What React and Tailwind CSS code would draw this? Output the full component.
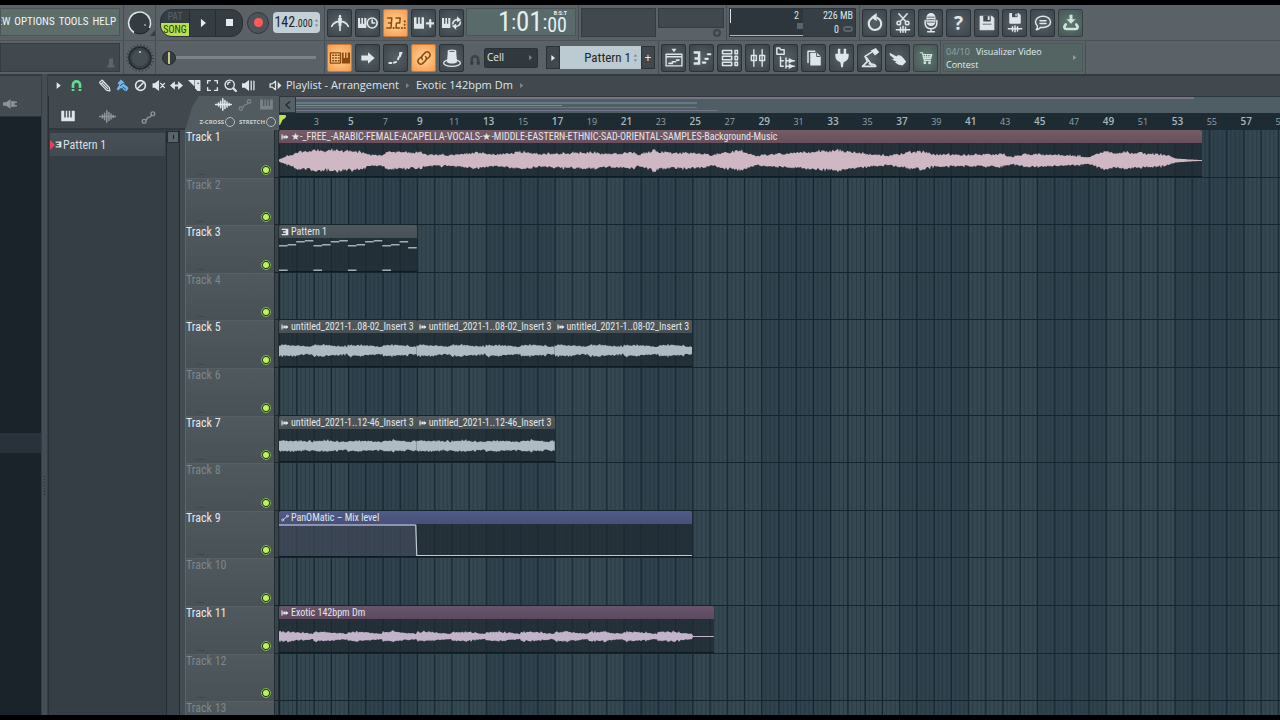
import React from "react";

const BAR = 17.22;
const FONT = "font-['Roboto_Condensed','Lato',sans-serif]";

/* ---------- icons ---------- */

function Icon({ children, className = "size-5", stroke = 1.6, fill = "none" }) {
  return (
    <svg
      viewBox="0 0 24 24"
      className={`shrink-0 ${className}`}
      fill={fill}
      stroke={fill === "none" ? "currentColor" : "none"}
      strokeWidth={stroke}
      strokeLinecap="round"
      strokeLinejoin="round"
      aria-hidden="true"
    >
      {children}
    </svg>
  );
}

const solid = { fill: "currentColor", stroke: "none" };
const pianoPath = "M3 5h4v9h2V5h2v9h2V5h2v9h2V5h4v14H3z";

const Piano = ({ className }) => (
  <Icon className={className}><path {...solid} d={pianoPath} /></Icon>
);
const Wave = ({ className }) => (
  <Icon className={className} stroke={2.2}>
    <path d="M1 12h22M5 10v4M8 7.500v9M11 4v16M14 6.500v11M17 8.500v7M20 10.500v3" />
  </Icon>
);
const Nodes = ({ className }) => (
  <Icon className={className} stroke={2.2}>
    <circle cx="5" cy="18" r="3" /><circle cx="19" cy="6" r="3" /><path d="M8 16.500L11 12l4-1 2-3" />
  </Icon>
);
const Tri = ({ className }) => (
  <Icon className={className}><path {...solid} d="M7 3l11 9-11 9z" /></Icon>
);
const Play = ({ className }) => (
  <Icon className={className}><path {...solid} d="M7 2l12 10L7 22z" /></Icon>
);
const Magnet = ({ className }) => (
  <Icon className={className} stroke={5}>
    <path strokeLinecap="butt" d="M5.500 22V11a6.500 6.500 0 0 1 13 0v11" />
    <path stroke="#263036" strokeWidth="1.500" strokeLinecap="butt" d="M2 17.500h7M15 17.500h7" />
  </Icon>
);
const Pencil = ({ className }) => (
  <Icon className={className} stroke={2.2}>
    <path d="M3 6l5-4 13 14 1 6-6-1L3 7zM6 9l4-4M9 9l9 9M12 7l8 8" />
  </Icon>
);
const Brush = ({ className }) => (
  <Icon className={className}>
    <path {...solid} d="M9 1l6 5 1 5 4 2 3 4-3 5-5-1-3-4-4 0-4 4-3-2 3-5 2-3-3-3z" />
    <path stroke="#263f52" strokeWidth="1.500" d="M8 12l6-4M13 15l5 4" />
  </Icon>
);
const Ban = ({ className }) => (
  <Icon className={className} stroke={3}><circle cx="12" cy="12" r="9" /><path d="M6 18L18 6" /></Icon>
);
const Mute = ({ className }) => (
  <Icon className={className} stroke={2.4}>
    <path {...solid} d="M1 8h4l8-6v20l-8-6H1z" /><path d="M16 8l7 8M23 8l-7 8" />
  </Icon>
);
const Slip = ({ className }) => (
  <Icon className={className} stroke={4}>
    <path {...solid} d="M0 12l9-8v16zM24 12l-9-8v16z" /><path d="M6 12h12" />
  </Icon>
);
const Knife = ({ className }) => (
  <Icon className={className} stroke={2}>
    <path {...solid} d="M0 2h12v12z" /><path d="M14 3h8v18h-4l-4-4z" fill="currentColor" /><circle cx="18.500" cy="8" r="1.500" fill="#41494e" stroke="none" />
  </Icon>
);
const SelectBox = ({ className }) => (
  <Icon className={className} stroke={2.6}>
    <path d="M3 8V3h5M16 3h5v5M21 16v5h-5M8 21H3v-5" />
  </Icon>
);
const Zoom = ({ className }) => (
  <Icon className={className} stroke={2.6}>
    <circle cx="10.500" cy="10.500" r="8.500" /><path d="M7 10a4 4 0 0 1 4-4" /><path strokeWidth="4" d="M17 17l5 5" />
  </Icon>
);
const PlayTool = ({ className }) => (
  <Icon className={className} stroke={2.4}>
    <path {...solid} d="M0 8h5l8-6v20l-8-6H0z" /><path d="M17 4v16M22 4v16" />
  </Icon>
);
const Speaker = ({ className }) => (
  <Icon className={className} stroke={2.4}>
    <path d="M2 9h4l6-5v16l-6-5H2z" /><path {...solid} d="M16 5l7 7-7 7z" />
  </Icon>
);
const ClipArrow = ({ className }) => (
  <Icon className={className} stroke={3}>
    <path d="M3 5v14M3 12h17" /><path {...solid} d="M8 5l6 7-6 7zM14 5l8 7-8 7z" />
  </Icon>
);
const PatternGlyph = ({ className }) => (
  <Icon className={className}>
    <path {...solid} d="M2 2h20v20H2v-4h12v-4H6v-4h8V6H2z" />
  </Icon>
);

const I = {
  metronome: (
    <Icon><path d="M12 3v18M2 16c2-4 5-6 10-6s8 2 10 6" strokeWidth="2" /><path {...solid} d="M9.500 6h5l-1 10h-3z" /><circle cx="12" cy="4" r="1.500" {...solid} /></Icon>
  ),
  wait: (
    <Icon stroke={2}><path {...solid} d="M0 6h2.500v7h1.500V6h2v7h1.500V6h2.500v12H0z" /><circle cx="17" cy="12" r="6" /><path d="M17 8.500V12h3" /></Icon>
  ),
  countdown: (
    <Icon stroke={1.8}>
      <path d="M2 6h5l-.500 6H3M6.500 12l-.500 6H1M12 6h5l-.500 6h-4l-.500 6h4" /><path strokeWidth="2.400" d="M9 18h.1M19 18h.1M22.500 10v.1M22.500 14v.1M22.500 18v.1" />
    </Icon>
  ),
  overdub: (
    <Icon stroke={2.6}><path {...solid} d="M0 5h3v8h2V5h2v8h2V5h3v14H0z" /><path d="M19.500 8.500v8M15.500 12.500h8" /></Icon>
  ),
  loop: (
    <Icon stroke={2}><path {...solid} d="M0 6h2.500v7h1.500V6h2v7h1.500V6h2.500v12H0z" /><path d="M13 13a5 5 0 0 1 7-4.500M22 11a5 5 0 0 1-7 4.500" /><path {...solid} d="M18 4l5 4.500-5 2.500zM17 20l-5-4.500 5-2.500z" /></Icon>
  ),
  typing: (
    <Icon className="size-[22px]" stroke={1.6}>
      <path strokeWidth="1.400" d="M1.500 6.500h11v11h-11z" /><path strokeWidth="1.500" d="M4 9h7M4 12h7M4 15h7" strokeDasharray="1 2" />
      <path {...solid} d="M14 6h2v6h1.500V6h1.500v6h1.500V6H23v12h-9z" />
    </Icon>
  ),
  arrow: <Icon><path {...solid} d="M4 9h8V5l8 7-8 7v-4H4z" /></Icon>,
  slide: (
    <Icon className="size-4" stroke={3}><path d="M2 19.500h3M9 19l3-1M15 14l1-3" /><path {...solid} d="M17 3h5l-3 8h-3z" /></Icon>
  ),
  link: (
    <Icon className="size-[18px]" stroke={2}>
      <path d="M10 14a4 4 0 0 1 0-5.500l4-4a4 4 0 0 1 5.500 5.500l-3 3M14 10a4 4 0 0 1 0 5.500l-4 4A4 4 0 0 1 4.500 14l3-3" />
    </Icon>
  ),
  hat: (
    <Icon stroke={1.6}>
      <ellipse cx="12" cy="18" rx="10" ry="4" /><path {...solid} d="M7 4h10l1 13c-2 2-10 2-12 0z" /><ellipse cx="12" cy="4" rx="4.500" ry="1.500" fill="#5b6469" />
    </Icon>
  ),
  undo: (
    <Icon stroke={2.6}><path d="M8 6.500a7.500 7.500 0 1 0 7 -.500" /><path {...solid} d="M7 5l7-5v10z" /></Icon>
  ),
  cut: (
    <Icon stroke={1.8}><path d="M7 1l8 9M17 1L9 10M4 20h16M9 17v6M12 16v7M15 17v6" /><circle cx="7" cy="12" r="2.200" /><circle cx="17" cy="12" r="2.200" /></Icon>
  ),
  mic: (
    <Icon stroke={1.8}><rect x="7.500" y="0.800" width="9" height="14" rx="4.500" fill="currentColor" /><path stroke="#4a5358" strokeWidth="1" d="M8 5h8M8 8h8M8 11h8" /><path d="M5 9v4a7 6 0 0 0 14 0V9M12 19v3M8 22.500h8" /></Icon>
  ),
  save: (
    <Icon className="size-[18px]"><path fill="currentColor" d="M3 3h15l3 3v15H3z" /><path fill="#424b50" stroke="none" d="M7 2h10v8H7zM6 13h12v1H6z" /><path fill="currentColor" stroke="none" d="M13 3h2.500v5H13z" /></Icon>
  ),
  saveNew: (
    <Icon stroke={1.8}><path fill="currentColor" d="M6 1h10l2 2v9H6z" /><path fill="#424b50" stroke="none" d="M8.500 0H15v5H8.500z" /><path fill="currentColor" stroke="none" d="M12.500 1H14v3h-1.500z" /><path d="M4 19h16M9 16.500v5M12 15.500v7M15 16.500v5" /></Icon>
  ),
  chat: (
    <Icon className="size-[18px]" stroke={2}><path d="M12 3c5.500 0 10 3 10 7.500S17.500 18 12 18c-1 0-2 0-3-.300C7 20 5 21 3 21c1.500-1.500 2-3 1.500-5C3 14.500 2 12.500 2 10.500 2 6 6.500 3 12 3z" /><path d="M8 9h8M8 12.500h8" /></Icon>
  ),
  download: (
    <Icon className="size-[18px]"><path {...solid} d="M10 1h4v6h4l-6 6-6-6h4z" /><path stroke="currentColor" strokeWidth="3.500" d="M5 14c-3 3-2 6 1 6h12c3 0 4-3 1-6" /></Icon>
  ),
  playlist: (
    <Icon><path d="M2.500 7.500h19v14h-19zM2.500 10.500h19" /><path {...solid} d="M9 1h6l-3 4z" /><path strokeWidth="2" d="M6 18.500h4M10 16.500h4M15 14.500h3" /></Icon>
  ),
  roll: (
    <Icon><path {...solid} d="M2 4h8v16H2v-3h5v-3H3v-3h4V7H2z" /><path strokeWidth="2.600" d="M13 17.500h3M16 13h3M19 7.500h3" /></Icon>
  ),
  rack: (
    <Icon stroke={1.8}><path d="M3 3h11v4H3zM3 10h11v4H3zM3 17h11v4H3zM18 3h3v4h-3zM18 10h3v4h-3zM18 17h3v4h-3z" /></Icon>
  ),
  mixer: (
    <Icon stroke={1.6}><path d="M7 2v6M7 16v6M17 2v6M17 16v6M4 9h6v6H4zM14 9h6v6h-6zM7 10.500v3M17 10.500v3" /></Icon>
  ),
  browser: (
    <Icon className="size-[22px]" stroke={1.6}><path d="M2 8V1h3l1 2h4v5zM6 11v10h3M6 15h3M12 12v6M12 15h9M12 19v4M12 21h9" /><path {...solid} d="M15 12l6 3-6 3zM15 18l6 3-6 3z" /></Icon>
  ),
  files: (
    <Icon className="size-[18px]"><path d="M4 18V3h9" strokeWidth="2" /><path {...solid} d="M7 5h9l5 5v12H7z" /><path stroke="#424b50" strokeWidth="1.200" d="M15.500 5.500V10H20" /></Icon>
  ),
  plug: (
    <Icon><path {...solid} d="M7 1h3v6h4V1h3v6h3v2c0 5-3 7-6 8l-1 6h-2l-1-6c-3-1-6-3-6-8V7h3z" /></Icon>
  ),
  lamp: (
    <Icon stroke={2}><path d="M14 5L6 10l3 6-6 6h16c-1-3-5-3-8-3M8 12l6 8" /><path {...solid} d="M13 3l6-3 4 5-5 4z" /></Icon>
  ),
  hand: (
    <Icon className="size-[18px]"><path {...solid} d="M1 5l9 5 2-2 4 1 3 3 4 5-5 5-5-1-5-3 2-1-6-3 3-1-6-5z" /></Icon>
  ),
  cart: (
    <Icon className="size-[14px]" stroke={2}><path d="M2 3h4l3 13h11M7 6h15l-2 7H9M11 6v7M15 6v7M19 6v6M7 10h14" /><circle cx="10" cy="20" r="1.500" /><circle cx="18" cy="20" r="1.500" /></Icon>
  ),
};

/* ---------- toolbar pieces ---------- */

function ToolButton({ label, active, tint, children }) {
  const look = active
    ? "bg-[radial-gradient(circle,#ffd796,#f59a50)] text-[#8a4a12] border-[#c87838]"
    : tint
      ? "bg-[radial-gradient(circle,#5f7873,#465653)] text-[#cfe4dc] border-[#37403f]"
      : "bg-[radial-gradient(circle,#566066,#3b4449)] text-[#dfe6e9] border-[#2c3338]";
  return (
    <button
      type="button"
      aria-label={label}
      className={`flex h-7 w-[25px] shrink-0 items-center justify-center rounded-[2px] border ${look}`}
    >
      {children}
    </button>
  );
}

const Sep = () => <div className="w-px shrink-0 self-stretch bg-[#464e53]" />;

function Knob({ ring }) {
  return (
    <svg viewBox="0 0 30 30" className="size-[30px]" role="img" aria-label={ring ? "Main volume" : "Main pitch"}>
      {ring ? (
        <>
          <circle cx="15" cy="15" r="11" fill="#343c41" stroke="#20272b" />
          <path d="M9 24.500A11 11 0 1 1 24.500 20" fill="none" stroke="#dce4e7" strokeWidth="1.600" />
          <circle cx="20" cy="17" r="1" fill="#9aa4a8" />
          <path d="M30 22v6h-5z" fill="#353d41" />
        </>
      ) : (
        <>
          <circle cx="15" cy="15" r="13" fill="none" stroke="#373f43" strokeWidth="2" strokeDasharray="1 2.400" />
          <circle cx="15" cy="15" r="11" fill="#3a4247" stroke="#22292d" strokeWidth="1.500" />
          <circle cx="15" cy="15" r="8" fill="#454e53" />
          <circle cx="15" cy="9" r="1" fill="#cbd4d8" />
        </>
      )}
    </svg>
  );
}

function TopBar() {
  return (
    <header className="shrink-0 overflow-hidden bg-[#5a6268]">
      <div className="flex h-9 border-b border-[#4b5358]">
        <nav className={`my-[3px] flex h-7 w-[120px] shrink-0 items-center justify-end gap-1 overflow-hidden border border-[#4a5655] bg-[#5d6d6a] pr-[3px] text-[11px] text-[#f0f5f4] ${FONT}`}>
          <button type="button">VIEW</button>
          <button type="button">OPTIONS</button>
          <button type="button">TOOLS</button>
          <button type="button">HELP</button>
        </nav>
        <div className="w-[3px] shrink-0" />
        <Sep />
        <div className="flex w-[31px] shrink-0 items-center justify-center"><Knob ring /></div>
        <Sep />
        <div className="flex w-[168px] shrink-0 items-center pl-1">
          <div className="flex h-7 w-[83px] overflow-hidden rounded-[12px] border border-[#2a3034] bg-[#363d42]">
            <button type="button" className={`flex w-7 flex-col text-center text-[10px] leading-[13px] ${FONT}`}>
              <span className="block w-full text-[#596167]">PAT</span>
              <span className="block w-full bg-[#b5e04f] text-[#2a3a10]">SONG</span>
            </button>
            <button type="button" aria-label="Play" className="flex w-[27px] items-center justify-center border-x border-[#272d31] text-[#e6ebed]"><Play className="size-[10px]" /></button>
            <button type="button" aria-label="Stop" className="flex flex-1 items-center justify-center"><span className="size-[7px] bg-[#e6ebed]" /></button>
          </div>
          <button type="button" aria-label="Record" className="ml-1 flex size-[22px] items-center justify-center rounded-full border border-[#31383c] bg-[#4c5459]">
            <span className="size-[9px] rounded-full bg-[#ff5a55]" />
          </button>
          <button type="button" aria-label="Tempo" className="ml-1 flex h-[21px] w-[47px] items-center justify-center gap-px rounded-[4px] bg-[#c3d0d6] text-[#1e262a]">
            <span className={`text-[14px] leading-5 ${FONT}`}>142<span className="text-[10px]">.000</span></span>
            <span className="flex flex-col text-[#7b8a91]"><Tri className="size-[5px] -rotate-90" /><Tri className="size-[5px] rotate-90" /></span>
          </button>
        </div>
        <Sep />
        <div className="flex shrink-0 items-center gap-[3px] px-[2px]">
          <ToolButton label="Metronome">{I.metronome}</ToolButton>
          <ToolButton label="Wait for input">{I.wait}</ToolButton>
          <ToolButton label="Countdown before recording" active>{I.countdown}</ToolButton>
          <ToolButton label="Overdub">{I.overdub}</ToolButton>
          <ToolButton label="Loop recording">{I.loop}</ToolButton>
        </div>
        <div className={`my-[3px] flex h-7 w-[110px] shrink-0 items-center justify-end border border-[#4a5655] bg-[#586a6a] pr-2 text-[#e4eff2] ${FONT}`}>
          <span className="text-[27px] leading-7">1</span>
          <span className="text-[20px] leading-7">:</span>
          <span className="text-[27px] leading-7">01</span>
          <span className="text-[20px] leading-7">:</span>
          <span className="flex flex-col items-end">
            <span className="text-[6px] leading-[6px] font-bold">B:S:T</span>
            <span className="text-[20px] leading-[18px]">00</span>
          </span>
        </div>
        <div className="w-[2px] shrink-0" />
        <Sep />
        <div className="my-[3px] ml-[2px] w-[75px] shrink-0 border border-[#353c41] bg-[#41484e]" />
        <div className="mt-[3px] ml-[2px] flex w-[66px] shrink-0 flex-col items-end">
          <div className="h-5 w-full border border-[#353c41] bg-[#41484e]" />
          <span className="mt-[1px] mr-[3px] size-[8px] rounded-full border-2 border-[#3d454a]" />
        </div>
        <div className="w-[2px] shrink-0" />
        <Sep />
        <div className={`my-[3px] ml-[2px] grid w-[127px] shrink-0 grid-cols-[1fr_52px] grid-rows-2 border border-[#2d343a] bg-[#2d363d] text-right text-[10px] leading-[13px] text-[#dfe6e9] ${FONT}`}>
          <span className="border-l border-[#dfe6e9] pr-1">2</span>
          <span className="bg-[#353f45] pr-[2px]">226 MB</span>
          <span className="border-b border-[#aeb8bd]"><span className="ml-auto block size-[6px] bg-[#59636a]" /></span>
          <span className="flex items-center justify-end gap-1 bg-[#353f45] pr-[2px]">0<span className="h-[6px] w-[10px] rounded-full border-2 border-[#59636a]" /></span>
        </div>
        <div className="w-[3px] shrink-0" />
        <Sep />
        <div className="flex shrink-0 items-center gap-[3px] px-[2px]">
          <ToolButton label="Undo">{I.undo}</ToolButton>
          <ToolButton label="Cut">{I.cut}</ToolButton>
          <ToolButton label="Record audio">{I.mic}</ToolButton>
          <ToolButton label="Help"><span className="font-['Open_Sans',sans-serif] text-[19px] leading-5 font-bold">?</span></ToolButton>
          <ToolButton label="Save">{I.save}</ToolButton>
          <ToolButton label="Save new version">{I.saveNew}</ToolButton>
          <ToolButton label="Comments">{I.chat}</ToolButton>
          <ToolButton label="Download" tint>{I.download}</ToolButton>
        </div>
      </div>

      <div className="flex h-[33px]">
        <div className="my-[2px] flex w-[120px] shrink-0 items-end justify-end border border-[#363d42] bg-[#41484e] pr-[2px] pb-[2px] text-[#5d666b]">
          <Icon className="size-3"><path {...solid} d="M8 3h8v13h3v5H5v-5h3z" /></Icon>
        </div>
        <div className="w-[3px] shrink-0" />
        <Sep />
        <div className="flex w-[31px] shrink-0 items-center justify-center"><Knob /></div>
        <Sep />
        <div className="flex w-[168px] shrink-0 items-center pl-[6px] pr-2">
          <input
            type="range"
            min="0"
            max="100"
            defaultValue="0"
            aria-label="Song position"
            className="h-[14px] w-full appearance-none bg-[linear-gradient(#7b8489,#7b8489)] bg-[length:100%_3px] bg-center bg-no-repeat [&::-webkit-slider-thumb]:size-[14px] [&::-webkit-slider-thumb]:appearance-none [&::-webkit-slider-thumb]:rounded-full [&::-webkit-slider-thumb]:border [&::-webkit-slider-thumb]:border-[#22282b] [&::-webkit-slider-thumb]:bg-[linear-gradient(90deg,#363d40_5px,#c9c98a_5px,#c9c98a_7px,#363d40_7px)]"
          />
        </div>
        <Sep />
        <div className="flex shrink-0 items-center gap-[3px] px-[2px]">
          <ToolButton label="Typing keyboard to piano" active>{I.typing}</ToolButton>
          <ToolButton label="Step edit">{I.arrow}</ToolButton>
          <ToolButton label="Slide notes">{I.slide}</ToolButton>
          <ToolButton label="Link controls" active>{I.link}</ToolButton>
          <ToolButton label="Hat">{I.hat}</ToolButton>
        </div>
        <div className="flex w-[18px] shrink-0 items-center justify-center pt-1 text-[#3a4247]"><Magnet className="size-3" /></div>
        <div className="relative flex w-[54px] shrink-0 items-center text-[#e6ebed]">
          <select aria-label="Snap" className="h-5 w-full appearance-none rounded-[2px] border border-[#2a3034] bg-[#32393e] pl-[2px] font-['Open_Sans',sans-serif] text-[10px]">
            <option>Cell</option>
          </select>
          <span className="pointer-events-none absolute right-1 text-[#7a8489]"><Tri className="size-[7px]" /></span>
        </div>
        <div className="ml-2 flex shrink-0 items-center">
          <button type="button" aria-label="Pattern menu" className="flex h-[23px] w-[14px] items-center justify-center border border-[#2c3338] bg-[#40484d] text-[#e6ebed]"><Tri className="size-2" /></button>
          <button type="button" className={`flex h-[23px] w-[81px] items-center justify-end gap-[2px] bg-[#bccad1] pr-[3px] text-[13px] text-[#1e262a] ${FONT}`}>
            Pattern 1
            <span className="flex flex-col text-[#7b8a91]"><Tri className="size-[5px] -rotate-90" /><Tri className="size-[5px] rotate-90" /></span>
          </button>
          <button type="button" aria-label="Add pattern" className="flex h-[23px] w-[14px] items-center justify-center border border-[#2c3338] bg-[#40484d] text-[12px] leading-3 text-[#e6ebed]">+</button>
        </div>
        <div className="w-[3px] shrink-0" />
        <Sep />
        <div className="flex shrink-0 items-center gap-[3px] px-[2px]">
          <ToolButton label="View playlist">{I.playlist}</ToolButton>
          <ToolButton label="View piano roll">{I.roll}</ToolButton>
          <ToolButton label="View channel rack">{I.rack}</ToolButton>
          <ToolButton label="View mixer">{I.mixer}</ToolButton>
          <ToolButton label="View browser">{I.browser}</ToolButton>
          <ToolButton label="Project picker">{I.files}</ToolButton>
          <ToolButton label="Plugin picker">{I.plug}</ToolButton>
          <ToolButton label="Tempo tapper">{I.lamp}</ToolButton>
          <ToolButton label="Touch controllers">{I.hand}</ToolButton>
          <ToolButton label="Shop" tint>{I.cart}</ToolButton>
        </div>
        <Sep />
        <a href="#news" className="mx-[2px] my-[2px] flex w-[140px] shrink-0 items-center justify-between border border-[#495a59] bg-[#536463] pr-1 pl-[2px] font-['Open_Sans',sans-serif] text-[9px] leading-[13px] text-[#e2eceb]">
          <span><span className="mr-[6px] text-[#93a5a3]">04/10</span>Visualizer Video<br />Contest</span>
          <span className="text-[#8fa19f]"><Tri className="size-[7px]" /></span>
        </a>
        <Sep />
      </div>
    </header>
  );
}

/* ---------- playlist ---------- */

const tools = [
  ["Draw", Pencil], ["Paint", Brush], ["Delete", Ban], ["Mute", Mute], ["Slip", Slip],
  ["Slice", Knife], ["Select", SelectBox], ["Zoom", Zoom], ["Playback", PlayTool],
];

function PlaylistTitle() {
  return (
    <div className="flex h-[22px] shrink-0 items-center border-t-2 border-[#343b40] bg-[#41494e] pb-[2px] font-['Open_Sans',sans-serif] text-[12px] leading-4 text-[#dfe5e8]">
      <button type="button" aria-label="Playlist options" className="flex w-[20px] justify-center"><Tri className="size-[9px]" /></button>
      <button type="button" aria-label="Snap" className="flex w-[17px] justify-center text-[#5fdd8f]"><Magnet className="size-[13px]" /></button>
      <div className="ml-[10px] flex">
        {tools.map(([name, Glyph]) => (
          <button key={name} type="button" aria-label={name} className={`flex w-[18px] justify-center ${name === "Paint" ? "text-[#6bb9ee]" : ""}`}>
            <Glyph className="size-[13px]" />
          </button>
        ))}
      </div>
      <span className="ml-3 flex"><Speaker className="size-[13px]" /></span>
      <h1 className="ml-1 flex items-center gap-[5px] text-[11px] whitespace-nowrap">
        Playlist - Arrangement
        <Tri className="size-[7px] text-[#7c868b]" />
        Exotic 142bpm Dm
        <Tri className="size-[7px] text-[#7c868b]" />
      </h1>
    </div>
  );
}

function Picker() {
  return (
    <aside className="flex w-[137px] shrink-0 flex-col border-l border-[#2a3136] bg-[#41494e]">
      <div className="flex h-[34px] items-end border-b-2 border-[#30383d] pb-[3px]">
        <button type="button" aria-label="Patterns" className="flex w-[38px] justify-center text-[#dfe5e8]"><Piano className="size-[18px]" /></button>
        <button type="button" aria-label="Audio clips" className="flex w-[41px] justify-center text-[#8b9499]"><Wave className="size-[17px]" /></button>
        <button type="button" aria-label="Automation" className="flex w-[41px] justify-center text-[#8b9499]"><Nodes className="size-[15px]" /></button>
      </div>
      <div className="flex min-h-0 flex-1 bg-[#353e45]">
        <div className="flex-1 px-[1px] pt-[3px]">
          <button type="button" className={`flex h-[23px] w-full items-center bg-gradient-to-b from-[#465056] to-[#414a50] text-left text-[12px] text-[#d8dee1] ${FONT}`}>
            <svg viewBox="0 0 6 12" className="h-[10px] w-[5px]" aria-hidden="true"><path d="M0 0l6 6-6 6z" fill="#e2435c" /></svg>
            <PatternGlyph className="mr-px size-[7px]" />
            Pattern 1
          </button>
        </div>
        <div className="w-[14px] border-x border-[#262d32] bg-[#3a4349]">
          <div className="mt-px flex h-3 items-center justify-center border border-[#262d32] bg-[#59636a]"><span className="h-1 w-px bg-[#161b1e]" /></div>
        </div>
        <div className="w-[5px] bg-[#434c51]" />
      </div>
    </aside>
  );
}

function ArrangementCorner() {
  return (
    <div className="w-[94px] shrink-0 bg-[#41494e]">
      <div className="flex h-full flex-col items-end justify-between bg-[#525b60] pr-[3px] pb-[2px] [clip-path:polygon(15%_0,100%_0,100%_100%,0_100%,8%_30%)]">
        <div className="flex items-center gap-[6px] pr-px">
          <Wave className="size-[17px] text-[#e2e8ea]" />
          <Nodes className="size-[14px] text-[#79838a]" />
          <Piano className="size-[17px] text-[#79838a]" />
        </div>
        <div className="flex items-center gap-1 font-['Open_Sans',sans-serif] text-[6px] leading-3 font-bold text-[#c9d0d3]">
          <label className="flex items-center gap-px">Z-CROSS
            <input type="checkbox" className="size-[10px] appearance-none rounded-full border border-[#b3bcc0]" />
          </label>
          <label className="flex items-center gap-px">STRETCH
            <input type="checkbox" className="size-[10px] appearance-none rounded-full border border-[#b3bcc0]" />
          </label>
        </div>
      </div>
    </div>
  );
}

const rulerBars = Array.from({ length: 29 }, (_, i) => 3 + i * 2);

function Ruler() {
  return (
    <div className="flex min-w-0 flex-1 flex-col">
      <div className="flex h-[17px]">
        <button type="button" aria-label="Scroll left" className="flex w-[17px] shrink-0 items-center justify-center border border-[#2f373c] bg-[#566067] text-[#20282c]">
          <Icon className="size-[10px]" stroke={3}><path d="M16 4L7 12l9 8" /></Icon>
        </button>
        <svg className="h-full min-w-0 flex-1 bg-[#4f5d64]" aria-hidden="true">
          <rect width="100%" height="1" fill="#2d373d" />
          <rect y="1" width="898" height="2" fill="#7b7480" />
          <rect y="6" width="401" height="2" fill="#64788d" />
          <rect y="9" width="266" height="1" fill="#7d8a92" />
          <rect y="11" width="401" height="1" fill="#64788d" />
          <rect y="14" width="422" height="1" fill="#74758a" />
        </svg>
      </div>
      <div className="relative h-[17px] overflow-hidden bg-[#1e2b33] font-['Open_Sans',sans-serif] text-[#a9b7be]">
        <svg viewBox="0 0 8 12" className="absolute top-[2px] left-0 h-[10px] w-[7px]" aria-hidden="true"><path d="M0 0h8v3L4 6l-3 6H0z" fill="#bde552" /></svg>
        {rulerBars.map((bar) => (
          <span
            key={bar}
            className={`absolute top-0 w-6 text-center leading-[17px] ${bar % 4 === 1 ? "text-[10px] font-semibold" : "text-[9px] text-[#94a2a9]"}`}
            style={{ left: (bar - 1) * BAR - 9 }}
          >
            {bar}
          </span>
        ))}
      </div>
    </div>
  );
}

function GridBackdrop() {
  const lines = [];
  for (let i = 0; i < 32; i++) {
    lines.push(
      <rect key={i} x={(i * BAR) / 4} width={i % 4 === 0 ? 1.3 : 1} height="100%" fill={i % 4 === 0 ? "#13232c" : "#1d2f39"} opacity={i % 4 === 0 ? 1 : 0.6} />
    );
  }
  return (
    <svg className="absolute inset-0 size-full" aria-hidden="true">
      <defs>
        <pattern id="bars" width={BAR * 8} height="100" patternUnits="userSpaceOnUse">
          <rect width={BAR * 8} height="100" fill="#2f424d" />
          <rect width={BAR * 4} height="100" fill="#364953" />
          {lines}
        </pattern>
      </defs>
      <rect width="100%" height="100%" fill="url(#bars)" />
    </svg>
  );
}

/* Repeatable jitter so that the wave outlines are stable between renders. */
function jitter(n) {
  const v = Math.sin(n * 127.1) * 43758.5453;
  return v - Math.floor(v);
}

const vocalShape = [
  [0, 1], [4, 3], [12, 6], [20, 10], [30, 10], [41, 12], [46, 10], [56, 12], [65, 11], [80, 10], [92, 6], [104, 6], [108, 10],
  [125, 9], [140, 9], [152, 6], [168, 6], [182, 7], [200, 9], [212, 7], [222, 7], [240, 9], [250, 9], [262, 7], [285, 8],
  [313, 9], [331, 7], [353, 9], [359, 6], [374, 11], [394, 8], [409, 9], [434, 6], [448, 9], [461, 11], [478, 5],
  [494, 7], [541, 10], [561, 11], [581, 8], [609, 5], [631, 9], [644, 10], [653, 7], [687, 6], [721, 7], [734, 4],
  [746, 7], [781, 6], [811, 4], [824, 10], [838, 8], [851, 9], [888, 6], [897, 2], [910, 1], [924, 0.4],
];

function shapeAt(points, x) {
  for (let i = 1; i < points.length; i++) {
    if (x <= points[i][0]) {
      const [x0, a0] = points[i - 1];
      const [x1, a1] = points[i];
      return a0 + ((a1 - a0) * (x - x0)) / (x1 - x0);
    }
  }
  return points[points.length - 1][1];
}

function loopShape(high, low, end) {
  return (x) => {
    if (end && x > end) return 0.5;
    const phase = (x % (BAR * 2)) / (BAR * 2);
    return phase < 0.4 ? high : high - ((high - low) * (phase - 0.4)) / 0.6;
  };
}

function Waveform({ width, shape, color, seed }) {
  const top = [];
  const bottom = [];
  const count = Math.ceil(width);
  for (let i = 0; i <= count; i += 1) {
    const x = Math.min(i, width);
    const a = shape(x);
    const spread = a > 2 ? 0.3 : 0;
    const peak = a > 4 && jitter(i + seed * 7) > 0.85 ? 1.2 : 0;
    top.push(`${x} ${(18 - a * (1.05 - spread * jitter(i + seed)) - peak).toFixed(1)}`);
    bottom.push(`${x} ${(18 + a * (1.05 - spread * jitter(i + seed + 900)) + peak).toFixed(1)}`);
  }
  return (
    <svg viewBox={`0 0 ${width} 34`} preserveAspectRatio="none" className="block size-full" aria-hidden="true">
      <path d={`M${top.join("L")}L${bottom.reverse().join("L")}z`} fill={color} />
    </svg>
  );
}

function NotePreview() {
  const heights = [7, 6, 3, 2, 7, 6, 3, 2, 7, 6, 3, 2, 7, 6, 3, 9];
  const step = BAR / 2;
  return (
    <svg className="block size-full" aria-hidden="true">
      {heights.map((y, i) => <rect key={i} x={i * step} y={y} width={step} height="1.500" fill="#a3afb5" />)}
      {[0, 4, 8, 12].map((i) => <rect key={i} x={i * step} y="31.500" width={step} height="1.500" fill="#a3afb5" />)}
    </svg>
  );
}

function AutomationCurve({ bars, drop }) {
  const x = drop * BAR;
  const end = bars * BAR;
  return (
    <svg className="block size-full" aria-hidden="true">
      <rect width={x} height="36" fill="#7f83a8" opacity="0.25" />
      <path d={`M0 1H${x - 1}`} stroke="#8d93b0" strokeWidth="2" />
      <path d={`M${x - 1} 1L${x} 31.500H${end}`} fill="none" stroke="#c3cad9" strokeWidth="1.200" />
    </svg>
  );
}

const headTone = {
  rose: "bg-gradient-to-b from-[#755c67] to-[#674f5b]",
  grey: "bg-gradient-to-b from-[#505a5e] to-[#475054]",
  blue: "bg-gradient-to-b from-[#505c87] to-[#465079]",
  plum: "bg-gradient-to-b from-[#69556b] to-[#5d4a60]",
};

function Clip({ start, bars, tone, icon: Glyph, title, children }) {
  return (
    <article
      className="absolute inset-y-0 flex flex-col overflow-hidden"
      style={{ left: (start - 1) * BAR, width: bars * BAR }}
    >
      <div className={`flex h-[13px] shrink-0 items-center gap-[2px] overflow-hidden rounded-t-[2px] pl-[2px] text-[10px] leading-3 whitespace-nowrap text-[#e3e5e8] ${headTone[tone]} ${FONT}`}>
        <Glyph className="size-2" />
        {title}
      </div>
      <div className="min-h-0 flex-1 border-b border-[#0f1b22] bg-[#1f2a30]/70">{children}</div>
    </article>
  );
}

function audioClip(start, bars, tone, title, shape, color, seed) {
  return (
    <Clip key={start} start={start} bars={bars} tone={tone} icon={ClipArrow} title={title}>
      <Waveform width={bars * BAR} shape={shape} color={color} seed={seed} />
    </Clip>
  );
}

const leadShape = loopShape(6, 4);
const bassShape = loopShape(6, 4.5);
const exoticShape = loopShape(5, 3, 413);

const clips = {
  1: audioClip(1, 53.6, "rose", "★-_FREE_-ARABIC-FEMALE-ACAPELLA-VOCALS-★-MIDDLE-EASTERN-ETHNIC-SAD-ORIENTAL-SAMPLES-Background-Music", (x) => shapeAt(vocalShape, x), "#cfb8c4", 1),
  3: (
    <Clip start={1} bars={8} tone="grey" icon={PatternGlyph} title="Pattern 1"><NotePreview /></Clip>
  ),
  5: [1, 9, 17].map((s) => audioClip(s, 8, "grey", "untitled_2021-1..08-02_Insert 3", leadShape, "#afbbc2", 3)),
  7: [1, 9].map((s) => audioClip(s, 8, "grey", "untitled_2021-1..12-46_Insert 3", bassShape, "#afbbc2", 5)),
  9: (
    <Clip start={1} bars={24} tone="blue" icon={Nodes} title="PanOMatic – Mix level"><AutomationCurve bars={24} drop={8} /></Clip>
  ),
  11: audioClip(1, 25.25, "plum", "Exotic 142bpm Dm", exoticShape, "#c2b3cb", 8),
};

function Track({ number }) {
  const height = number % 5 === 2 || number % 5 === 4 ? "h-[47px]" : "h-12";
  return (
    <section className={`flex shrink-0 ${height}`}>
      <div className="relative flex w-[89px] shrink-0 border-t border-l border-t-[#566065] border-l-[#5b656a] bg-gradient-to-b from-[#50595e] to-[#485155]">
        <h2 className={`text-[12px] leading-[13px] ${clips[number] ? "text-[#e3e8ea]" : "text-[#7c868b]"} ${FONT}`}>Track {number}</h2>
        <span className="absolute bottom-[3px] left-[11px] text-[9px] leading-[6px] text-[#2f383c]">...</span>
        <button type="button" aria-label={`Mute track ${number}`} className="absolute right-[3px] bottom-[3px] flex size-[10px] items-center justify-center rounded-full border border-[#86b94a] bg-[#25360f]">
          <span className="size-[6px] rounded-full bg-[#b9f266]" />
        </button>
      </div>
      <div className="w-[5px] shrink-0 border-x border-b border-x-[#222c32] border-b-[#1a2328] bg-[#39444a]" />
      <div className="relative min-w-0 flex-1 overflow-hidden border-b border-[#16242c]">
        {clips[number]}
      </div>
    </section>
  );
}

export default function App() {
  return (
    <div className="flex h-screen flex-col overflow-hidden bg-black py-[5px]">
      <TopBar />
      <main className="flex min-h-0 flex-1">
        <aside className="flex w-[41px] shrink-0 flex-col bg-[#1b232a]">
          <div className="flex h-[43px] items-end border-t-2 border-b border-t-[#343b40] border-b-[#2b3237] bg-[#444c51] pb-[5px] pl-[3px] text-[#8b9499]">
            <Icon className="size-[14px]" stroke={2.4}><path {...solid} d="M0 9h5l8-5v16l-8-5H0z" /><path {...solid} d="M14 7h6v10h-6z" /><path d="M20 9h3M20 15h3" /></Icon>
          </div>
          <div className="mt-[316px] h-5 bg-[#29323a]" />
        </aside>
        <div className="flex w-[7px] shrink-0 items-center justify-center border-x border-[#363e43] bg-[#444d53] pt-[180px]">
          <span className="h-5 w-[3px] bg-[radial-gradient(#252c30_1px,transparent_1px)] bg-[length:3px_3px]" />
        </div>
        <div className="flex min-w-0 flex-1 flex-col">
          <PlaylistTitle />
          <div className="flex min-h-0 flex-1">
            <Picker />
            <div className="flex min-w-0 flex-1 flex-col">
              <div className="flex h-[34px] shrink-0">
                <ArrangementCorner />
                <Ruler />
              </div>
              <div className="relative flex min-h-0 flex-1 flex-col overflow-hidden">
                <div className="absolute inset-y-0 right-0 left-[94px]"><GridBackdrop /></div>
                <div className="relative flex flex-col">
                  {Array.from({ length: 13 }, (_, i) => <Track key={i} number={i + 1} />)}
                </div>
              </div>
            </div>
          </div>
        </div>
      </main>
    </div>
  );
}
